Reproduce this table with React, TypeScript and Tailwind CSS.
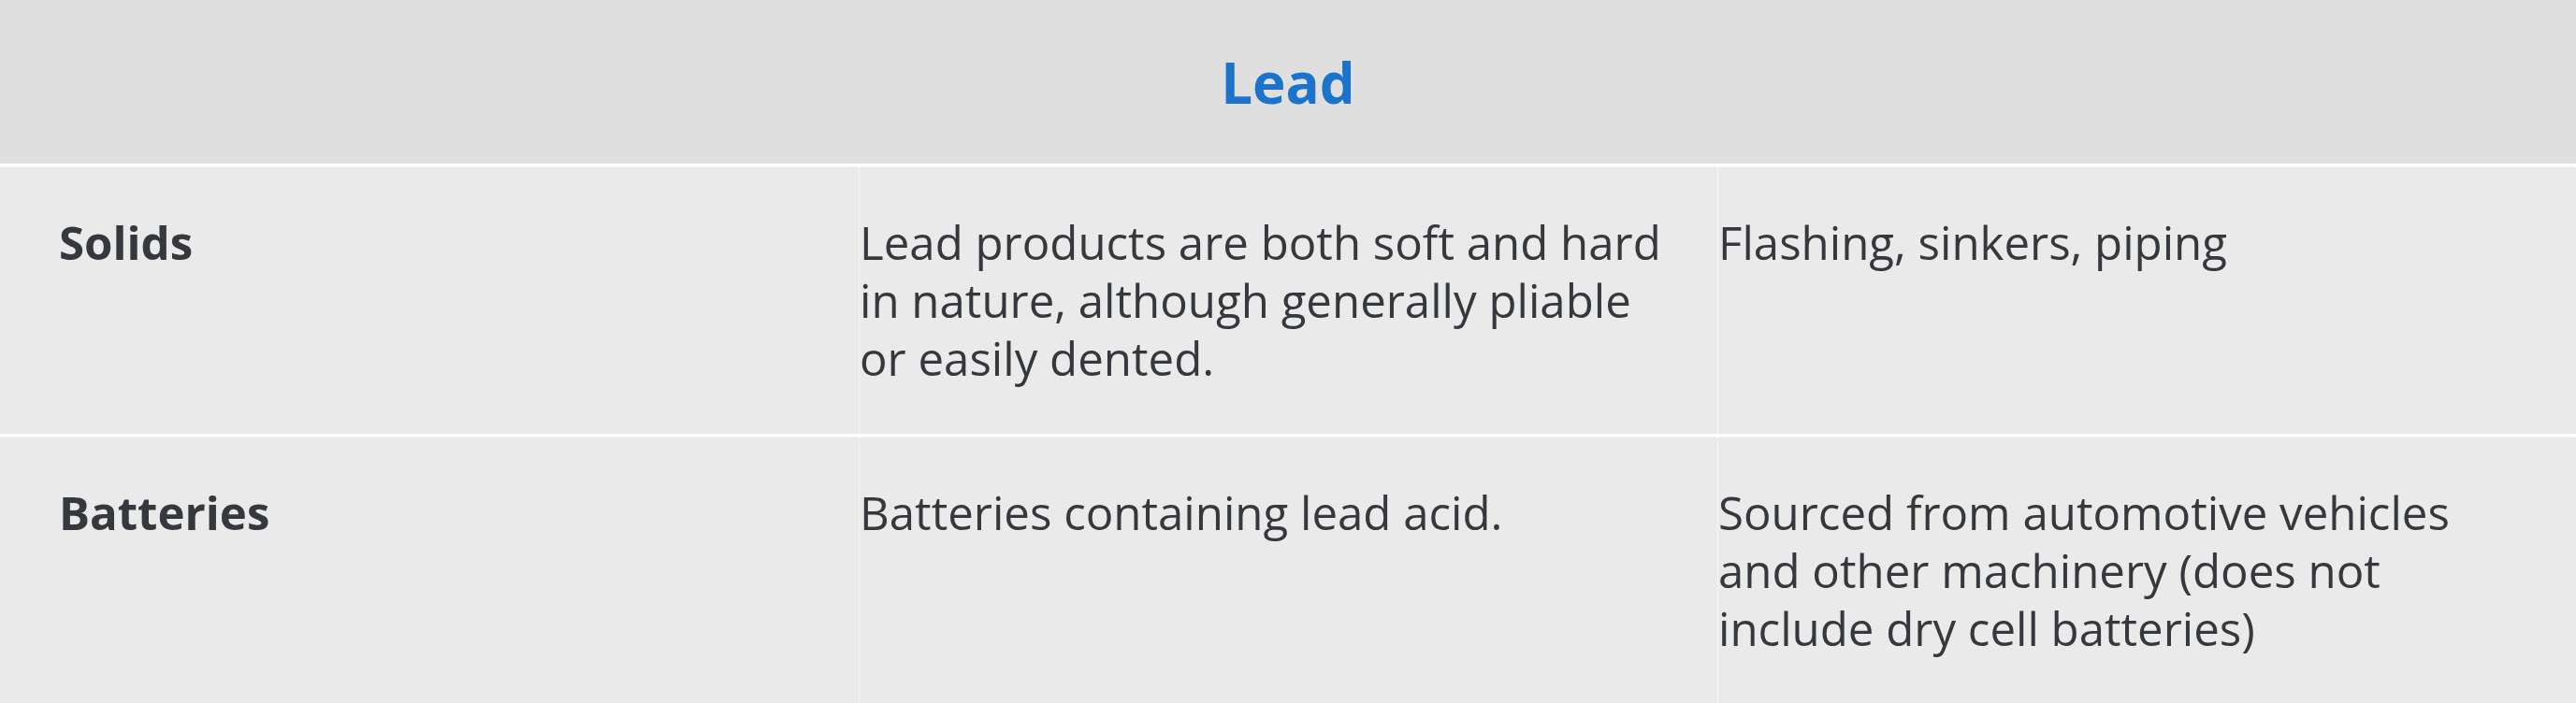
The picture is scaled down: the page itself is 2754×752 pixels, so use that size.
const rows = [
	{
		label: 'Solids',
		description:
			'Lead products are both soft and hard in nature, although generally pliable or easily dented.',
		examples: 'Flashing, sinkers, piping',
	},
	{
		label: 'Batteries',
		description: 'Batteries containing lead acid.',
		examples:
			'Sourced from automotive vehicles and other machinery (does not include dry cell batteries)',
	},
]

export default function App() {
	return (
		<div className="w-full min-h-screen bg-[#eaeaea] font-['Open_Sans',sans-serif] text-[#35383d]">
			<div className="h-[175px] bg-[#dfdfdf] flex items-center justify-center border-b-[3px] border-white box-content">
				<h2 className="text-[60px] font-bold text-[#1b73cc] leading-none">Lead</h2>
			</div>

			{rows.map((row, i) => (
				<div
					key={row.label}
					className={`grid grid-cols-3 text-[49.2px] leading-[62px] ${
						i > 0 ? 'border-t-[3px] border-white' : ''
					}`}
				>
					<div className="pl-[63px] pr-[63px] pt-[49px] pb-[50px] font-bold border-t border-dotted border-white">
						{row.label}
					</div>
					<div className="pr-[60px] pt-[49px] pb-[50px] border-t border-l border-dotted border-white">
						{row.description}
					</div>
					<div className="pr-[60px] pt-[49px] pb-[50px] border-t border-l border-dotted border-white">
						{row.examples}
					</div>
				</div>
			))}
		</div>
	)
}
